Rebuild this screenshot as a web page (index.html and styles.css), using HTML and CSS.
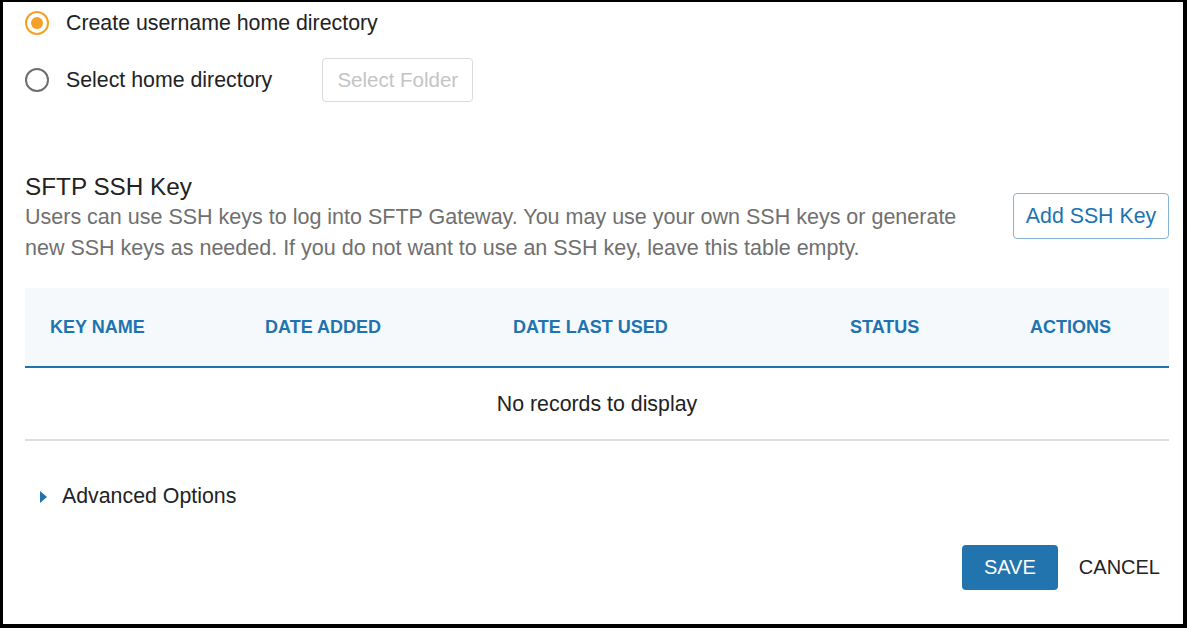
FILE: index.html
```html
<!DOCTYPE html>
<html lang="en">
<head>
<meta charset="utf-8">
<title>SFTP User</title>
<link rel="stylesheet" href="styles.css">
</head>
<body>
<div class="frame">
  <div class="radio-row first">
    <span class="radio checked"></span>
    <span class="radio-label">Create username home directory</span>
  </div>
  <div class="radio-row second">
    <span class="radio"></span>
    <span class="radio-label">Select home directory</span>
    <button class="btn-folder" disabled>Select Folder</button>
  </div>

  <div class="key-head">
    <div class="key-text">
      <h2 class="key-title">SFTP SSH Key</h2>
      <p class="key-desc">Users can use SSH keys to log into SFTP Gateway. You may use your own SSH keys or generate new SSH keys as needed. If you do not want to use an SSH key, leave this table empty.</p>
    </div>
    <button class="btn-outline">Add SSH Key</button>
  </div>

  <div class="table">
    <div class="thead">
      <div class="th">KEY NAME</div>
      <div class="th">DATE ADDED</div>
      <div class="th">DATE LAST USED</div>
      <div class="th">STATUS</div>
      <div class="th">ACTIONS</div>
    </div>
    <div class="tbody">No records to display</div>
  </div>

  <div class="advanced">
    <span class="caret"></span>
    <span class="adv-label">Advanced Options</span>
  </div>

  <div class="actions">
    <button class="btn-primary">SAVE</button>
    <button class="btn-text">CANCEL</button>
  </div>
</div>
</body>
</html>
```

FILE: styles.css
```css
* { box-sizing: border-box; }
html, body { margin: 0; padding: 0; background: #fff; }
body { font-family: "Liberation Sans", Arial, sans-serif; color: #222; }

.frame {
  width: 1187px;
  height: 628px;
  border-style: solid;
  border-color: #000;
  border-width: 2px 4px 4px 3px;
  padding: 1px 14px 0 22px;
  display: flex;
  flex-direction: column;
  overflow: hidden;
}

.radio-row { display: flex; align-items: center; }
.radio-row.first { height: 40px; }
.radio-row.second { height: 44px; margin-top: 15px; }

.radio {
  width: 24px;
  height: 24px;
  border-radius: 50%;
  border: 2px solid #6e6e6e;
  display: flex;
  align-items: center;
  justify-content: center;
  flex: none;
}
.radio.checked { border-color: #f7a027; }
.radio.checked::after {
  content: "";
  width: 12px;
  height: 12px;
  border-radius: 50%;
  background: #f7a027;
}
.radio-label { margin-left: 17px; font-size: 21.33px; color: #222; }

.btn-folder {
  margin-left: 50px;
  height: 44px;
  width: 151px;
  border: 1px solid #dcdcdc;
  border-radius: 4px;
  background: #fff;
  color: #c4c4c4;
  font-family: inherit;
  font-size: 20.5px;
  padding: 0;
}

.key-head {
  margin-top: 69px;
  display: flex;
  justify-content: space-between;
  align-items: flex-start;
}
.key-title {
  margin: 0;
  font-size: 24.3px;
  font-weight: normal;
  line-height: 31px;
  color: #222;
}
.key-desc {
  margin: 0;
  width: 965px;
  font-size: 21.5px;
  line-height: 31px;
  color: #707070;
}
.btn-outline {
  margin-top: 22px;
  width: 156px;
  height: 46px;
  border: 1px solid #86b4d8;
  border-radius: 4px;
  background: #fff;
  color: #2173b0;
  font-family: inherit;
  font-size: 21.33px;
  padding: 0;
}

.table { margin-top: 24px; }
.thead {
  display: grid;
  grid-template-columns: 215px 248px 337px 180px 1fr;
  height: 80px;
  align-items: center;
  background: #f5f9fc;
  border-bottom: 2px solid #2173b0;
}
.th {
  padding-left: 25px;
  font-size: 18px;
  font-weight: bold;
  color: #2173b0;
}
.tbody {
  height: 73px;
  padding-top: 1px;
  display: flex;
  align-items: center;
  justify-content: center;
  font-size: 21.33px;
  color: #222;
  border-bottom: 2px solid #dedede;
}

.advanced {
  margin-top: 40px;
  height: 31px;
  display: flex;
  align-items: center;
}
.caret {
  margin-left: 15px;
  width: 0;
  height: 0;
  border-top: 6px solid transparent;
  border-bottom: 6px solid transparent;
  border-left: 7px solid #2173b0;
}
.adv-label { margin-left: 15px; font-size: 21.33px; color: #222; }

.actions {
  margin-top: 33px;
  display: flex;
  justify-content: flex-end;
  align-items: center;
}
.btn-primary {
  width: 96px;
  height: 45px;
  border: none;
  border-radius: 4px;
  background: #2174ae;
  color: #fff;
  font-family: inherit;
  font-size: 20px;
  padding: 0;
}
.btn-text {
  margin-left: 12px;
  height: 45px;
  padding: 0 9px;
  border: none;
  background: transparent;
  color: #222;
  font-family: inherit;
  font-size: 20px;
}
```
